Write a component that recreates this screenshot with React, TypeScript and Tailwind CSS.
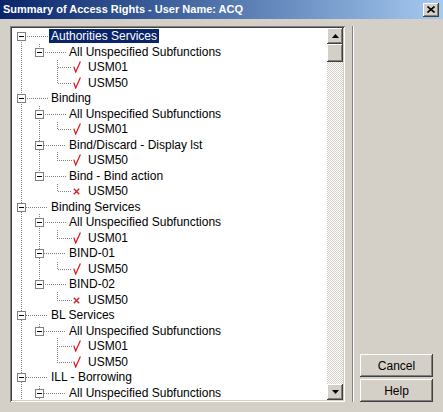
import React from "react"

type Row = {
  level: number
  text: string
  box?: boolean
  icon?: "check" | "cross"
  last?: boolean
  first?: boolean
  selected?: boolean
}

const rows: Row[] = [
  { level: 0, text: "Authorities Services", box: true, first: true, selected: true },
  { level: 1, text: "All Unspecified Subfunctions", box: true, last: true },
  { level: 2, text: "USM01", icon: "check" },
  { level: 2, text: "USM50", icon: "check", last: true },
  { level: 0, text: "Binding", box: true },
  { level: 1, text: "All Unspecified Subfunctions", box: true },
  { level: 2, text: "USM01", icon: "check", last: true },
  { level: 1, text: "Bind/Discard - Display lst", box: true },
  { level: 2, text: "USM50", icon: "check", last: true },
  { level: 1, text: "Bind - Bind action", box: true, last: true },
  { level: 2, text: "USM50", icon: "cross", last: true },
  { level: 0, text: "Binding Services", box: true },
  { level: 1, text: "All Unspecified Subfunctions", box: true },
  { level: 2, text: "USM01", icon: "check", last: true },
  { level: 1, text: "BIND-01", box: true },
  { level: 2, text: "USM50", icon: "check", last: true },
  { level: 1, text: "BIND-02", box: true, last: true },
  { level: 2, text: "USM50", icon: "cross", last: true },
  { level: 0, text: "BL Services", box: true },
  { level: 1, text: "All Unspecified Subfunctions", box: true, last: true },
  { level: 2, text: "USM01", icon: "check" },
  { level: 2, text: "USM50", icon: "check", last: true },
  { level: 0, text: "ILL - Borrowing", box: true },
  { level: 1, text: "All Unspecified Subfunctions", box: true },
]

// dotted tree lines, pixel checkerboard aligned to the page
const DOT =
  "bg-[repeating-conic-gradient(#808080_0_25%,transparent_0_50%)] bg-[length:2px_2px] bg-fixed"

const RAISED =
  "bg-[#d4d0c8] shadow-[inset_-1px_-1px_#404040,inset_1px_1px_#ffffff,inset_-2px_-2px_#808080,inset_2px_2px_#d4d0c8]"

function CheckIcon() {
  return (
    <svg width="8" height="12" viewBox="0 0 8 12">
      <path
        d="M0.8 5.6 L2.7 11 L7.4 0.6"
        fill="none"
        stroke="#e01818"
        strokeWidth="1.25"
      />
    </svg>
  )
}

function CrossIcon() {
  return (
    <svg width="7" height="7" viewBox="0 0 7 7">
      <path
        d="M0.8 0.8 L6.2 6.2 M6.2 0.8 L0.8 6.2"
        fill="none"
        stroke="#d82020"
        strokeWidth="1.4"
      />
    </svg>
  )
}

function CollapseBox() {
  return (
    <div className="absolute left-[5px] top-[4px] flex h-[9px] w-[9px] items-center justify-center border border-[#808080] bg-white">
      <div className="h-px w-[5px] bg-black" />
    </div>
  )
}

function TreeRow({
  row,
  ancestors,
  index,
}: {
  row: Row
  ancestors: boolean[]
  index: number
}) {
  return (
    <div
      className={`flex shrink-0 items-start ${
        index % 2 === 0 ? "h-[16px]" : "h-[15px]"
      }`}
    >
      {ancestors.map((isLast, k) => (
        <div key={k} className="relative w-[18px] shrink-0 self-stretch">
          {!isLast && (
            <div className={`absolute bottom-0 left-[9px] top-0 w-px ${DOT}`} />
          )}
        </div>
      ))}

      <div className="relative w-[18px] shrink-0 self-stretch">
        {!row.first && (
          <div className={`absolute left-[9px] top-0 h-[9px] w-px ${DOT}`} />
        )}
        {!row.last && (
          <div className={`absolute bottom-0 left-[9px] top-[8px] w-px ${DOT}`} />
        )}
        <div
          className={`absolute left-[9px] top-[8px] h-px ${
            row.icon ? "w-[15px]" : "w-[27px]"
          } ${DOT}`}
        />
        {row.box && <CollapseBox />}
      </div>

      {row.icon ? (
        <div
          className={`w-[19px] shrink-0 pl-[7px] ${
            row.icon === "check" ? "pt-[2px]" : "pt-[5px]"
          }`}
        >
          {row.icon === "check" ? <CheckIcon /> : <CrossIcon />}
        </div>
      ) : (
        <div className="w-[18px] shrink-0" />
      )}

      <span
        className={`ml-[1px] mt-[1px] h-[14px] whitespace-nowrap px-[2px] text-[12px] leading-[14px] ${
          row.selected ? "bg-[#0a246a] text-white" : "text-black"
        }`}
      >
        {row.text}
      </span>
    </div>
  )
}

function Arrow({ up }: { up?: boolean }) {
  return (
    <svg width="7" height="4" viewBox="0 0 7 4">
      <path d={up ? "M3.5 0 L7 4 L0 4 Z" : "M0 0 L7 0 L3.5 4 Z"} fill="#000" />
    </svg>
  )
}

function ScrollBar() {
  return (
    <div className="flex w-[16px] shrink-0 flex-col">
      <div className={`flex h-[16px] items-center justify-center ${RAISED}`}>
        <Arrow up />
      </div>
      <div className={`h-[18px] ${RAISED}`} />
      <div className="flex-1 bg-[repeating-conic-gradient(#d4d0c8_0_25%,#ffffff_0_50%)] bg-[length:2px_2px]" />
      <div className={`flex h-[16px] items-center justify-center ${RAISED}`}>
        <Arrow />
      </div>
    </div>
  )
}

function TreePanel() {
  const lastAt: boolean[] = []

  return (
    <div className="flex h-[376px] w-[335px] shrink-0 bg-white p-[2px] shadow-[inset_1px_1px_#808080,inset_-1px_-1px_#ffffff,inset_2px_2px_#404040,inset_-2px_-2px_#d4d0c8]">
      <div className="flex flex-1 flex-col overflow-hidden">
        {rows.map((row, i) => {
          lastAt[row.level] = !!row.last
          const ancestors = lastAt.slice(0, row.level)
          return (
            <TreeRow key={i} row={row} ancestors={ancestors} index={i} />
          )
        })}
        <div className="flex flex-1">
          <div className="relative w-[18px] shrink-0">
            <div className={`absolute bottom-0 left-[9px] top-0 w-px ${DOT}`} />
          </div>
          <div className="relative w-[18px] shrink-0">
            <div className={`absolute bottom-0 left-[9px] top-0 w-px ${DOT}`} />
          </div>
        </div>
      </div>
      <ScrollBar />
    </div>
  )
}

function TitleBar() {
  return (
    <div className="flex h-[19px] shrink-0 items-center justify-between bg-linear-to-r from-[#0a246a] to-[#a6caf0] pl-[3px] pr-[4px]">
      <span className="text-[11px] font-bold text-white">
        Summary of Access Rights - User Name: ACQ
      </span>
      <div className={`flex h-[14px] w-[16px] items-center justify-center ${RAISED}`}>
        <svg width="8" height="7" viewBox="0 0 8 7">
          <path
            d="M0.5 0.5 L7.5 6.5 M7.5 0.5 L0.5 6.5"
            fill="none"
            stroke="#000"
            strokeWidth="1.6"
          />
        </svg>
      </div>
    </div>
  )
}

function DialogButton({ label }: { label: string }) {
  return (
    <button
      className={`flex h-[23px] w-[73px] items-center justify-center text-[12px] text-black ${RAISED}`}
    >
      {label}
    </button>
  )
}

export default function App() {
  return (
    <div className="flex h-[412px] w-[443px] flex-col overflow-hidden bg-[#d4d0c8] font-['Liberation_Sans',Arial,sans-serif]">
      <TitleBar />

      <div className="flex pl-[10px] pt-[7px]">
        <TreePanel />

        <div className="ml-[7px] h-[376px] w-[2px] shrink-0 border-l border-r border-l-[#808080] border-r-white" />

        <div className="flex h-[376px] flex-col justify-end gap-[2px] pl-[6px]">
          <DialogButton label="Cancel" />
          <DialogButton label="Help" />
        </div>
      </div>
    </div>
  )
}
